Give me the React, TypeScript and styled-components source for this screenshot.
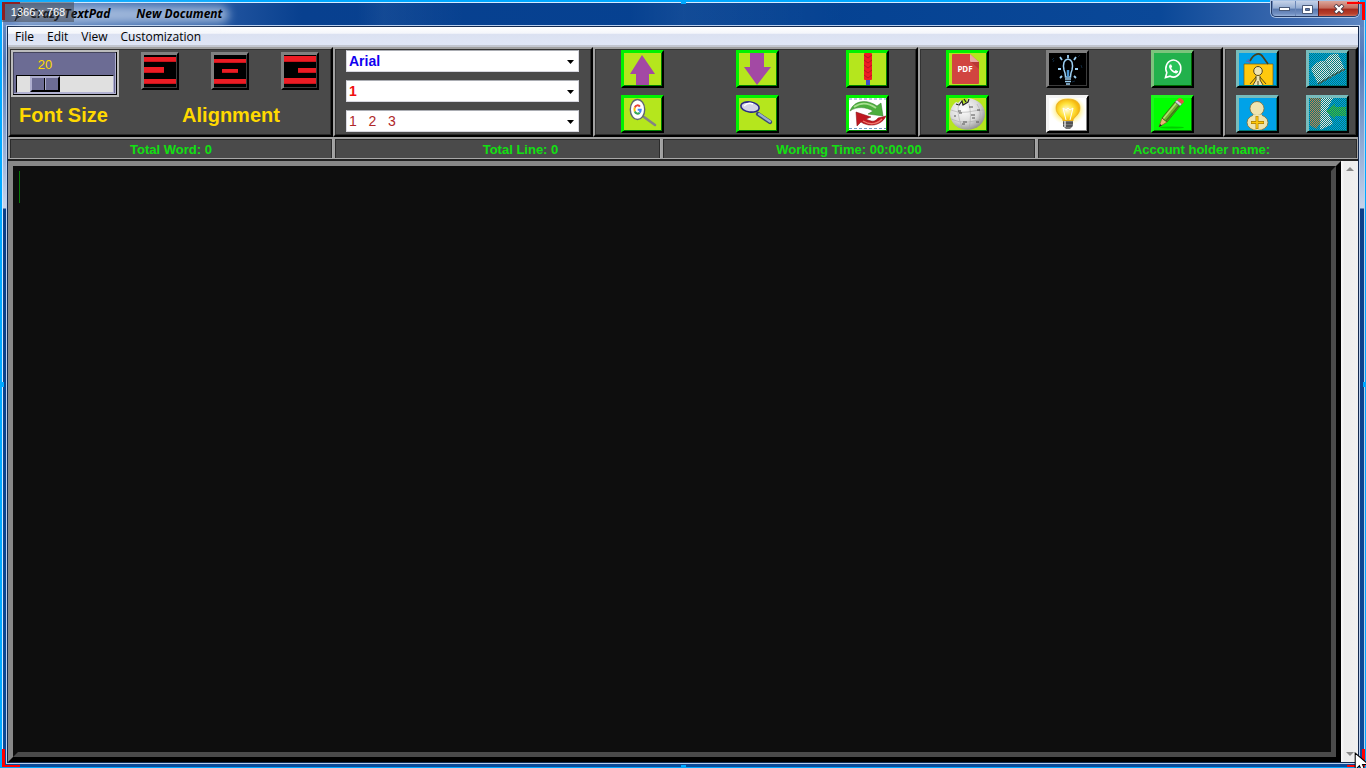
import React, { useState } from "react";
import styled, { createGlobalStyle, css } from "styled-components";

const GlobalStyle = createGlobalStyle`
  * { box-sizing: border-box; }
  html, body { margin: 0; height: 100%; }
  #root { height: 100%; }
  body { font-family: "Liberation Sans", Arial, sans-serif; overflow: hidden; }
`;

/* ---------- window frame ---------- */

const Window = styled.div`
  position: relative;
  min-height: 100vh;
  display: flex;
  flex-direction: column;
  padding: 0 6px 4px 5px;
  border: 1px solid #00a8ff;
  border-top-width: 2px;
  border-left-width: 2px;
  box-shadow: inset 1px 1px 0 #d5eaff, inset -1px 0 0 #b8d4ee;
  background:
    linear-gradient(90deg, transparent 0, transparent 26%, #ffffff0c 28%, transparent 34%, transparent 46%, #ffffff0d 50%, transparent 62%) 0 0 / 100% 25px no-repeat,
    linear-gradient(90deg, #6f8fc8 0, #5d83bd 2%, #2b5ca5 14%, #08408f 22%, #054292 60%, #0a4898 85%, #3e6bb0 95%, #5c86c2 100%) 0 0 / 100% 25px no-repeat,
    linear-gradient(#6f93c8 0, #5078b8 60px, #c4d3ea 206px, #0b3f88 207px, #0b4a98 100%);
`;

const TitleBar = styled.header`
  position: relative;
  height: 24px;
  flex: none;
  display: flex;
  justify-content: space-between;
  align-items: flex-start;
`;

const TitleGlow = styled.div`
  position: absolute;
  left: 6px;
  top: 4px;
  width: 216px;
  height: 17px;
  border-radius: 9px;
  background: #c3d3ea;
  opacity: 0.72;
  filter: blur(5px);
`;

const Title = styled.h1`
  position: relative;
  display: flex;
  gap: 26px;
  margin: 3px 0 0 23px;
  font: italic bold 12px/18px "Open Sans", sans-serif;
  color: #000;
`;

const Feather = styled.svg`
  position: absolute;
  left: -17px;
  top: 1px;
  width: 12px;
  height: 16px;
`;

const WindowButtons = styled.div`
  position: relative;
  display: flex;
  height: 16px;
  margin-top: -1px;
  border: 1px solid #243b66;
  border-top: 0;
  border-radius: 0 0 5px 5px;
  overflow: hidden;
  box-shadow: 0 0 0 1px #a9c2e4;
`;

const WindowButton = styled.button<{ $close?: boolean }>`
  width: ${(p) => (p.$close ? 40 : 23)}px;
  height: 16px;
  padding: 0;
  border: 0;
  border-left: 1px solid ${(p) => (p.$close ? "#5d1c1c" : "#6b87b8")};
  display: grid;
  place-items: center;
  background: ${(p) =>
    p.$close
      ? "linear-gradient(#dba79c 0, #c46a5a 45%, #a52a1c 50%, #b8402c 80%, #d8836e 100%)"
      : "linear-gradient(#c5d2e8 0, #93abd1 45%, #5878ad 50%, #7290c2 80%, #a6c0e2 100%)"};
`;

const Client = styled.main`
  flex: 1;
  display: flex;
  flex-direction: column;
  border: 1px solid #13294f;
  box-shadow: 0 0 0 1px #b9cfee;
  background: #4a4a4a;
`;

/* ---------- menu ---------- */

const MenuBar = styled.nav`
  height: 20px;
  flex: none;
  display: flex;
  align-items: flex-end;
  border-bottom: 2px solid #c2c6d0;
  background: linear-gradient(#ffffff 0, #f4f6fb 35%, #dbe1f1 40%, #dfe6f6 100%);
`;

const MenuItem = styled.button`
  height: 18px;
  padding: 0 6px 0 7px;
  border: 0;
  background: none;
  color: #000;
  font: 12px/20px "Open Sans", sans-serif;
`;

/* ---------- toolbar ---------- */

const Toolbar = styled.section`
  flex: none;
  display: grid;
  grid-template-columns: 325fr 260fr 325fr 305fr 135fr;
`;

const group = css`
  height: 90px;
  min-width: 0;
  border: 2px solid;
  border-color: #a0a0a0 #000 #000 #a0a0a0;
  box-shadow: inset -1px -1px 0 #2a2a2a, inset 1px 1px 0 #333;
  background: #4a4a4a;
`;

const FormatGroup = styled.div`
  ${group}
  display: flex;
  padding: 1px 0 0 1px;
`;

const SizeColumn = styled.div`
  flex: none;
  width: 108px;
  display: flex;
  flex-direction: column;
`;

const SizeScale = styled.div`
  height: 47px;
  padding: 0 1px 0 3px;
  border: 2px solid #bcbcbc;
  box-shadow: inset -1px -1px 0 #000, inset 1px 1px 0 #44445c, inset -2px -2px 0 #b0b0d0;
  background: #6c6c94;
`;

const SizeValue = styled.output`
  display: block;
  width: 58px;
  height: 23px;
  text-align: center;
  font-size: 13px;
  line-height: 25px;
  color: #ffd900;
`;

const SizeRange = styled.input`
  display: block;
  appearance: none;
  width: 98px;
  height: 18px;
  margin: 0;
  border: 1px solid #000;
  border-right-color: #b0b0d0;
  border-bottom-color: #b0b0d0;
  background: #e0e0e0;
  &::-webkit-slider-thumb {
    appearance: none;
    width: 30px;
    height: 16px;
    border: 2px solid;
    border-color: #aeaece #000 #000 #aeaece;
    background: linear-gradient(90deg, #6c6c94 0 12px, #000 12px 13px, #aeaece 13px 14px, #6c6c94 14px);
  }
`;

const GroupLabel = styled.label`
  display: block;
  font-size: 20px;
  font-weight: bold;
  line-height: 24px;
  color: #ffd900;
`;

const SizeLabel = styled(GroupLabel)`
  margin: 6px 0 0 8px;
`;

const AlignColumn = styled.div`
  flex: 1;
  padding: 2px 12px 0 22px;
`;

const AlignButtons = styled.div`
  display: flex;
  justify-content: space-between;
`;

const AlignLabel = styled.div`
  margin-top: 13px;
  padding-left: 2px;
  text-align: center;
  font-size: 20px;
  font-weight: bold;
  line-height: 24px;
  color: #ffd900;
`;

type Tone = { face: string; light: string; dark: string };

const tones: Record<string, Tone> = {
  black: { face: "#000", light: "#808080", dark: "#3c3c3c" },
  lime: { face: "#b5e61d", light: "#00f200", dark: "#008000" },
  white: { face: "#fff", light: "#f4f4f4", dark: "#888" },
  greenOnWhite: { face: "#fff", light: "#00f200", dark: "#008000" },
  green: { face: "#00ff00", light: "#1cf81c", dark: "#008000" },
  whatsapp: { face: "#22b14c", light: "#7cc47c", dark: "#006a00" },
  sky: { face: "#00a2e8", light: "#78bcbc", dark: "#007878" },
};

const ToolButton = styled.button<{ $tone: Tone; $square?: boolean }>`
  width: ${(p) => (p.$square ? 38 : 43)}px;
  height: 38px;
  padding: 1px;
  border: 2px solid;
  border-color: ${(p) => p.$tone.light} #000 #000 ${(p) => p.$tone.light};
  box-shadow: inset 1px 1px 0 ${(p) => p.$tone.light}, inset -1px -1px 0 ${(p) => p.$tone.dark};
  background: ${(p) => p.$tone.face};
  & > svg { display: block; width: 100%; height: 100%; }
`;

const SelectGroup = styled.div`
  ${group}
  display: flex;
  flex-direction: column;
  gap: 8px;
  padding: 1px 12px 0 11px;
`;

const SelectBox = styled.div`
  position: relative;
  height: 22px;
`;

const Select = styled.select<{ $color: string; $plain?: boolean }>`
  appearance: none;
  display: block;
  width: 100%;
  height: 22px;
  padding: 0 20px 0 2px;
  border: 1px solid #d8d8e0;
  border-top-color: #abadb3;
  border-radius: 0;
  background: #fff;
  color: ${(p) => p.$color};
  font: ${(p) => (p.$plain ? "normal" : "bold")} 14px/20px "Liberation Sans", Arial, sans-serif;
`;

const SelectArrow = styled.svg`
  position: absolute;
  right: 5px;
  top: 10px;
  width: 7px;
  height: 4px;
  pointer-events: none;
`;

const ButtonGrid = styled.div<{ $columns: string; $indent: number }>`
  ${group}
  display: grid;
  grid-template-columns: ${(p) => p.$columns};
  grid-template-rows: 38px 38px;
  row-gap: 7px;
  padding: 1px 0 0 ${(p) => p.$indent}px;
`;

/* ---------- status ---------- */

const StatusBar = styled.section`
  flex: none;
  display: grid;
  grid-template-columns: 325fr 328fr 375fr 322fr;
  border-bottom: 2px solid #222;
`;

const StatusCell = styled.div<{ $shift?: number }>`
  height: 22px;
  padding-left: ${(p) => p.$shift ?? 0}px;
  border: 1px solid #a8a8a8;
  border-top: 2px solid #a0a0a0;
  border-left: 2px solid #a0a0a0;
  box-shadow: inset 1px 1px 0 #2a2a2a, inset -1px 0 0 #2a2a2a;
  text-align: center;
  font-size: 13px;
  font-weight: bold;
  line-height: 21px;
  white-space: nowrap;
  color: #12e012;
`;

/* ---------- editor ---------- */

const Workspace = styled.section`
  flex: 1;
  min-height: 0;
  display: flex;
`;

const EditorFrame = styled.div`
  position: relative;
  flex: 1;
  display: flex;
  border: 5px solid;
  border-color: #888 #000 #000 #888;
`;

const Editor = styled.textarea`
  flex: 1;
  padding: 0 2px;
  border: 5px solid;
  border-color: #0e0e0e #4a4a4a #4a4a4a #0e0e0e;
  border-radius: 0;
  outline: 0;
  resize: none;
  background: #0e0e0e;
  color: #00a000;
  font: 20px/32px "Liberation Sans", Arial, sans-serif;
`;

const Caret = styled.span`
  position: absolute;
  left: 6px;
  top: 5px;
  width: 1px;
  height: 32px;
  background: #0a7a0a;
`;

const ScrollBar = styled.div`
  width: 17px;
  display: flex;
  flex-direction: column;
  justify-content: space-between;
  align-items: center;
  padding: 5px 0;
  background: linear-gradient(90deg, #fafafa 0, #ececec 20%, #f0f0f0 100%);
`;

const ScrollArrow = styled.button`
  width: 17px;
  height: 6px;
  padding: 0;
  border: 0;
  background: none;
  display: grid;
  place-items: center;
`;

/* ---------- capture frame marks ---------- */

const SizeBadge = styled.div`
  position: absolute;
  left: 0;
  top: 0;
  width: 72px;
  height: 20px;
  text-align: center;
  background: rgba(60, 62, 68, 0.5);
  color: #fff;
  font: 11px/21px "Liberation Sans", Arial, sans-serif;
`;

const Corner = styled.i<{ $v: "top" | "bottom"; $h: "left" | "right"; $color?: string }>`
  position: absolute;
  width: 18px;
  height: 18px;
  pointer-events: none;
  ${(p) => p.$v}: 0;
  ${(p) => p.$h}: 0;
  border: 0 solid ${(p) => p.$color ?? "#ff0000"};
  border-${(p) => p.$v}-width: 2px;
  border-${(p) => p.$h}-width: 3px;
`;

const Handle = styled.i<{ $side: "top" | "bottom" | "left" | "right" }>`
  position: absolute;
  width: 5px;
  height: 5px;
  background: #00a8ff;
  ${(p) => p.$side}: -3px;
  ${(p) => (p.$side === "top" || p.$side === "bottom" ? "left: calc(50% - 3px);" : "top: calc(50% - 3px);")}
`;

const Cursor = styled.svg`
  position: absolute;
  right: -4px;
  bottom: -6px;
  width: 15px;
  height: 21px;
`;

/* ---------- icons ---------- */

const Icon = ({ children, w = 37 }: { children: React.ReactNode; w?: number }) => (
  <svg viewBox={`0 0 ${w} 32`} preserveAspectRatio="none" aria-hidden="true">
    {children}
  </svg>
);

const AlignIcon = ({ bars }: { bars: number[][] }) => (
  <Icon w={32}>
    {bars.map(([x, y, w, h], i) => (
      <g key={i}>
        <rect x={x} y={y} width={w} height={h} fill="#ed1c24" />
        <path d={`M${x} ${y + h - 0.5}h${w}`} stroke="#c8141c" />
      </g>
    ))}
  </Icon>
);

const alignments = [
  { name: "Align left", bars: [[0, 2, 32, 5], [0, 12, 20, 6], [0, 24, 32, 5]] },
  { name: "Align center", bars: [[0, 4, 32, 4], [8, 14, 16, 4], [0, 24, 32, 5]] },
  { name: "Align right", bars: [[0, 1, 32, 6], [14, 13, 18, 5], [0, 23, 32, 6]] },
];

const UpIcon = () => <Icon><path d="M18 2 31 21h-6v11H12V21H6z" fill="#a349a4" /></Icon>;
const DownIcon = () => <Icon><path d="M11 0h14v14h7L18 32 5 14h6z" fill="#a349a4" /></Icon>;

const RodIcon = () => (
  <Icon>
    <rect x="15" width="8" height="27" rx="1" fill="#ed1c24" />
    <rect x="17" y="27" width="4" height="5" fill="#3f48cc" />
    {[2, 7, 12, 17, 22].map((y) => (
      <path key={y} d={`M15 ${y}l4 3 4-3`} fill="none" stroke="#9c1420" strokeWidth="0.7" />
    ))}
  </Icon>
);

const GoogleIcon = () => (
  <Icon>
    <path d="M20 19 31 27" stroke="#848484" strokeWidth="2.6" strokeLinecap="round" />
    <ellipse cx="13.5" cy="11.5" rx="7.2" ry="10" fill="#fff" stroke="#5f6672" strokeWidth="1.4" />
    <g fill="none" strokeWidth="2">
      <path d="M15.900 8.600A3.200 4.200 0 0 0 10.800 9.500" stroke="#ea4335" />
      <path d="M10.800 9.500A3.200 4.200 0 0 0 10.800 13.500" stroke="#fbbc05" />
      <path d="M10.800 13.500A3.200 4.200 0 0 0 15.600 14.700" stroke="#34a853" />
      <path d="M15.600 14.700A3.200 4.200 0 0 0 16.700 11.700H13.700" stroke="#4285f4" />
    </g>
  </Icon>
);

const SearchIcon = () => (
  <Icon>
    <path d="m19 16 12 8" stroke="#3c4a78" strokeWidth="4.200" strokeLinecap="round" />
    <path d="m20 16 11 7.500" stroke="#9cb0d0" strokeWidth="2.200" strokeLinecap="round" />
    <ellipse cx="11" cy="9" rx="9.200" ry="5" fill="#d4d4e8" stroke="#2b2b86" strokeWidth="1.600" transform="rotate(8 11 9)" />
    <path d="M5 8q4-4 9-2" stroke="#fff" strokeWidth="1.500" fill="none" />
  </Icon>
);

const SwapIcon = () => (
  <Icon>
    <path d="M0 1h37M0 30.500h37" stroke="#6f9cc4" strokeWidth="1" strokeDasharray="3 2" />
    <path d="M1 13C5 2 18 1 28 8l4-3 2 13-15-2 5-3C17 9 8 8 1 13z" fill="#4cae3c" stroke="#2f7f28" strokeWidth="0.500" />
    <path d="M5 9C12 4 20 5 27 10" stroke="#a8e090" strokeWidth="1.800" fill="none" />
    <path d="M37 18C33 27 21 30 12 24l-4 4-1-14 15 5-5 2c6 3 9 3 12-1z" fill="#c01820" stroke="#800c10" strokeWidth="0.500" />
    <path d="M14 23c7 4 14 3 19-2" stroke="#ee7a70" strokeWidth="1.400" fill="none" />
  </Icon>
);

const PdfIcon = () => (
  <Icon>
    <path d="M4 1h17l9 8v21q0 1-1 1H4q-1 0-1-1V2q0-1 1-1z" fill="#d14540" />
    <path d="M21 1v7q0 1 1 1h8z" fill="#eba7a2" />
    <path d="M22 9h8v7z" fill="#b83a36" />
    <text x="16" y="19" textAnchor="middle" fontFamily="Noto Sans, sans-serif" fontWeight="bold" fontSize="8" fill="#fff">PDF</text>
  </Icon>
);

const GlobeIcon = () => (
  <Icon>
    <defs>
      <radialGradient id="globe" cx="0.4" cy="0.35" r="0.7">
        <stop offset="0" stopColor="#ffffff" />
        <stop offset="0.6" stopColor="#dadada" />
        <stop offset="1" stopColor="#8c8c8c" />
      </radialGradient>
    </defs>
    <ellipse cx="18.500" cy="16" rx="17.500" ry="15.800" fill="url(#globe)" />
    <path d="M6 3 9 5l3-3 2 4 4-2 1-4-8-1z" fill="#b5e61d" />
    <path d="M7 6 10 7l3-4 1 4 5-3 1-3M15 1l2 3" fill="none" stroke="#222" strokeWidth="1.200" />
    <path d="M2 12q8 4 17 2t16-2M2 21q8 4 17 3t15-3M10 5q-3 10 3 24M20 6q3 11 0 25M28 6q6 9 1 20" fill="none" stroke="#aaa" strokeWidth="0.600" />
    <path d="M9 13h3M10 15h3M22 17h4M23 20h3M14 24h4M28 12h3M5 18h2M20 9h4M13 26h3M27 24h3" stroke="#555" strokeWidth="1.100" />
  </Icon>
);

const IdeaIcon = () => (
  <Icon>
    <g fill="none" stroke="#9cd0f4" strokeWidth="1.500">
      <path d="M16.500 24q0-4-1.500-7-2-10 4-11 6 1 4 11-1.500 3-1.500 7z" />
      <path d="M19 24v-7" stroke="#4a94d0" strokeWidth="2.500" />
      <path d="M16 26h6M16 28.500h6M17 31h4" strokeWidth="1.500" />
      <path d="M19 5V2M13 7l-2-3M25 7l2-3M12 16H9M26 16h3M13 23l-2 2M25 23l2 2" strokeWidth="1.800" />
    </g>
    <path d="m3 7 2-2M4 9l1-2M32 12l1 3M29 4l2-2M23 29l3-1" stroke="#10283c" />
  </Icon>
);

const BulbIcon = () => (
  <Icon>
    <defs>
      <radialGradient id="glow">
        <stop offset="0.5" stopColor="#ffe34a" />
        <stop offset="1" stopColor="#fff8b0" stopOpacity="0" />
      </radialGradient>
      <radialGradient id="glass" cx="0.45" cy="0.5">
        <stop offset="0" stopColor="#fffce0" />
        <stop offset="0.6" stopColor="#ffe23c" />
        <stop offset="1" stopColor="#f5b810" />
      </radialGradient>
    </defs>
    <ellipse cx="19" cy="12" rx="18" ry="15" fill="url(#glow)" />
    <path d="M14 23c0-4-7-6-7-13C7 4 12 1 19 1s12 3 12 9c0 7-7 9-7 13z" fill="url(#glass)" stroke="#e0a820" strokeWidth="0.600" />
    <path d="m14 10 3 12M24 10l-3 12M14 10l3 2 2-2 2 2 3-2" fill="none" stroke="#fff" strokeWidth="1" />
    <path d="M14 23h10v5l-3 3h-4l-3-3z" fill="#777" />
    <path d="M14 25h10M14 28h9" stroke="#333" strokeWidth="1.200" />
    <path d="M16 23v6" stroke="#ddd" strokeWidth="1.500" />
  </Icon>
);

const WhatsAppIcon = () => (
  <Icon>
    <path d="m11.500 24.500 1.300-4.800a7.500 8.500 0 1 1 3.300 3.500z" fill="#28c35a" stroke="#fff" strokeWidth="1.600" />
    <path d="M16 11.500c-1 .8-1.200 2-.6 3.500 1 2.600 3.200 4.600 5.800 5.300 1.600.4 2.800-.5 3-2l-2.500-1.300-1.200 1.200c-1.600-.7-2.700-1.800-3.300-3.200l1-1.300-1-2.200z" fill="#fff" />
  </Icon>
);

const PencilIcon = () => (
  <Icon>
    <ellipse cx="18" cy="29.500" rx="12" ry="1" fill="#00cc00" />
    <path d="m5 29 3-9 5 4z" fill="#e8b878" stroke="#8a5020" strokeWidth="0.600" />
    <path d="m5 29 1-3 2 1.500z" fill="#222" />
    <path d="M8 20 21 4l5 4-13 16z" fill="#6fb52c" stroke="#3c5c14" strokeWidth="0.800" />
    <path d="M9.500 20.500 22 5.500" stroke="#b4e070" strokeWidth="1.500" />
    <path d="M12 23 25 7.500" stroke="#3f7a18" strokeWidth="1.500" />
    <path d="m21 4 2-2 5 4-2 2z" fill="#d8d8e0" stroke="#667" strokeWidth="0.600" />
    <path d="m23 2 2-2q4 0 5 4l-2 2z" fill="#e85040" />
  </Icon>
);

const AccountIcon = () => (
  <Icon>
    <path d="M5 11h29v22H5z" fill="#ffc90e" stroke="#7a5a10" strokeWidth="0.700" />
    <path d="M11 8C15 0 21-1 24 4l5 7" fill="none" stroke="#4a4018" strokeWidth="1.700" />
    <path d="m7 8 4 1M9 6l2 4" stroke="#8050a0" strokeWidth="0.800" />
    <ellipse cx="19" cy="18" rx="4.300" ry="4.500" fill="#efe4b0" stroke="#54481c" />
    <path d="M17 23h4v4l3 5H14l3-5z" fill="#efe4b0" />
    <path d="M17 23v4l-3 5M21 23v4l3 5M17 24l-6 7M21 24l6 7M19 28v4" stroke="#54481c" fill="none" />
  </Icon>
);

const AddUserIcon = () => (
  <Icon>
    <ellipse cx="18.500" cy="24.500" rx="10.500" ry="8" fill="#efe4b0" stroke="#7c6c38" strokeWidth="0.800" />
    <ellipse cx="18" cy="10.500" rx="7" ry="7" fill="#efe4b0" stroke="#7c6c38" strokeWidth="0.800" />
    <path d="M14 16.500h9v3h-9z" fill="#efe4b0" />
    <path d="M18 18v13M12 24.500h13" stroke="#a87800" strokeWidth="2.800" />
    <path d="M18 18.500v12M12.500 24.500h12" stroke="#ffc90e" strokeWidth="1.600" />
  </Icon>
);

const Stipple = ({ id }: { id: string }) => (
  <>
    <defs>
      <pattern id={id} width="2" height="2" patternUnits="userSpaceOnUse">
        <path d="M0 0h1v1H0zM1 1h1v1H1z" fill="#007c7c" />
      </pattern>
    </defs>
    <rect width="37" height="32" fill={`url(#${id})`} />
  </>
);

const BookIcon = () => (
  <Icon>
    <path d="m2 16 7 15 14-7 13-7L29 1q-8-2-13 7Q9 6 2 16z" fill="#e4e4e4" />
    <path d="m9 31 14-8 13-7" stroke="#604030" strokeWidth="1.500" fill="none" />
    <path d="m16 8 7 16" stroke="#aaa" />
    <Stipple id="stipple-book" />
  </Icon>
);

const ExitIcon = () => (
  <Icon>
    <path d="M1 0h11v25l-5 6-6-4z" fill="#d08050" />
    <path d="M12 0h12l-6 12 6 14-13 6z" fill="#e8e8e8" />
    <path d="m17 13 9-7v3h11v9H26v3z" fill="#40c840" />
    <Stipple id="stipple-exit" />
  </Icon>
);

type Tool = { name: string; tone: string; icon: React.ComponentType; disabled?: boolean };

const fileTools: Tool[] = [
  { name: "Upload", tone: "lime", icon: UpIcon },
  { name: "Download", tone: "lime", icon: DownIcon },
  { name: "Marker", tone: "lime", icon: RodIcon },
  { name: "Search Google", tone: "lime", icon: GoogleIcon },
  { name: "Find", tone: "lime", icon: SearchIcon },
  { name: "Replace", tone: "greenOnWhite", icon: SwapIcon },
];

const extraTools: Tool[] = [
  { name: "Export PDF", tone: "lime", icon: PdfIcon },
  { name: "Dark mode", tone: "black", icon: IdeaIcon },
  { name: "WhatsApp", tone: "whatsapp", icon: WhatsAppIcon },
  { name: "Wikipedia", tone: "lime", icon: GlobeIcon },
  { name: "Light mode", tone: "white", icon: BulbIcon },
  { name: "Draw", tone: "green", icon: PencilIcon },
];

const accountTools: Tool[] = [
  { name: "Account", tone: "sky", icon: AccountIcon },
  { name: "Diary", tone: "sky", icon: BookIcon, disabled: true },
  { name: "Add account", tone: "sky", icon: AddUserIcon },
  { name: "Log out", tone: "sky", icon: ExitIcon, disabled: true },
];

const Tools = ({ items }: { items: Tool[] }) => (
  <>
    {items.map(({ name, tone, icon: Glyph, disabled }) => (
      <ToolButton key={name} type="button" aria-label={name} $tone={tones[tone]} disabled={disabled}>
        <Glyph />
      </ToolButton>
    ))}
  </>
);

const Combo = ({ label, value, color, plain }: { label: string; value: string; color: string; plain?: boolean }) => (
  <SelectBox>
    <Select aria-label={label} $color={color} $plain={plain} defaultValue={value}>
      <option value={value}>{value}</option>
    </Select>
    <SelectArrow viewBox="0 0 7 4" aria-hidden="true">
      <path d="M0 0h7L3.500 4z" fill="#000" />
    </SelectArrow>
  </SelectBox>
);

export default function App() {
  const [size, setSize] = useState(20);

  return (
    <>
      <GlobalStyle />
      <Window>
        <TitleBar>
          <TitleGlow />
          <Title>
            <Feather viewBox="0 0 12 16" aria-hidden="true">
              <path d="M2 15Q4 7 9 1q3 4-1 9l-4 2z" fill="#26364e" stroke="#111" />
            </Feather>
            <span>Crazy TextPad</span>
            <span>New Document</span>
          </Title>
          <WindowButtons>
            <WindowButton type="button" aria-label="Minimize">
              <svg width="11" height="5"><rect x="0.500" y="0.500" width="10" height="3" fill="#fff" stroke="#4a5a78" /></svg>
            </WindowButton>
            <WindowButton type="button" aria-label="Maximize">
              <svg width="11" height="9"><path d="M.5.5h10v8H.5z" fill="#fff" stroke="#4a5a78" /><path d="M3.500 3.500h4v2h-4z" fill="#5c7cb0" stroke="#4a5a78" /></svg>
            </WindowButton>
            <WindowButton type="button" aria-label="Close" $close>
              <svg width="12" height="10" viewBox="0 0 12 10">
                <path d="m2 1 8 8M10 1 2 9" stroke="#4a3c48" strokeWidth="4" />
                <path d="m2.500 1.500 7 7M9.500 1.500l-7 7" stroke="#fff" strokeWidth="2.400" />
              </svg>
            </WindowButton>
          </WindowButtons>
        </TitleBar>

        <Client>
          <MenuBar>
            {["File", "Edit", "View", "Customization"].map((m) => (
              <MenuItem key={m} type="button">{m}</MenuItem>
            ))}
          </MenuBar>

          <Toolbar>
            <FormatGroup>
              <SizeColumn>
                <SizeScale>
                  <SizeValue htmlFor="font-size">{size}</SizeValue>
                  <SizeRange
                    id="font-size"
                    type="range"
                    min={0}
                    max={100}
                    value={size}
                    onChange={(e) => setSize(Number(e.target.value))}
                  />
                </SizeScale>
                <SizeLabel htmlFor="font-size">Font Size</SizeLabel>
              </SizeColumn>
              <AlignColumn>
                <AlignButtons>
                  {alignments.map((a) => (
                    <ToolButton key={a.name} type="button" aria-label={a.name} $tone={tones.black} $square>
                      <AlignIcon bars={a.bars} />
                    </ToolButton>
                  ))}
                </AlignButtons>
                <AlignLabel>Alignment</AlignLabel>
              </AlignColumn>
            </FormatGroup>

            <SelectGroup>
              <Combo label="Font family" value="Arial" color="#1000f0" />
              <Combo label="Bullet" value="1" color="#f01010" />
              <Combo label="Numbering" value={"1\u00a0\u00a0\u00a02\u00a0\u00a0\u00a03"} color="#b02828" plain />
            </SelectGroup>

            <ButtonGrid $columns="115fr 110fr 70fr" $indent={26}>
              <Tools items={fileTools} />
            </ButtonGrid>
            <ButtonGrid $columns="100fr 105fr 70fr" $indent={26}>
              <Tools items={extraTools} />
            </ButtonGrid>
            <ButtonGrid $columns="70fr 50fr" $indent={11}>
              <Tools items={accountTools} />
            </ButtonGrid>
          </Toolbar>

          <StatusBar>
            <StatusCell>Total Word: 0</StatusCell>
            <StatusCell $shift={46}>Total Line: 0</StatusCell>
            <StatusCell>Working Time: 00:00:00</StatusCell>
            <StatusCell $shift={8}>Account holder name:</StatusCell>
          </StatusBar>

          <Workspace>
            <EditorFrame>
              <Editor aria-label="Document" spellCheck={false} />
              <Caret />
            </EditorFrame>
            <ScrollBar>
              <ScrollArrow type="button" aria-label="Scroll up">
                <svg width="8" height="4"><path d="M0 4 4 0l4 4z" fill="#8a8a8a" /></svg>
              </ScrollArrow>
              <ScrollArrow type="button" aria-label="Scroll down">
                <svg width="8" height="4"><path d="M0 0h8L4 4z" fill="#8a8a8a" /></svg>
              </ScrollArrow>
            </ScrollBar>
          </Workspace>
        </Client>

        <Corner $v="top" $h="left" $color="#e00000" />
        <Corner $v="top" $h="right" />
        <Corner $v="bottom" $h="left" />
        <Corner $v="bottom" $h="right" />
        <SizeBadge>1366 x 768</SizeBadge>
        <Handle $side="top" />
        <Handle $side="bottom" />
        <Handle $side="left" />
        <Handle $side="right" />
        <Cursor viewBox="0 0 14 20" aria-hidden="true">
          <path d="M1 1v16l4-4 3 7 3-1-3-7h6z" fill="#fff" stroke="#000" />
        </Cursor>
      </Window>
    </>
  );
}
